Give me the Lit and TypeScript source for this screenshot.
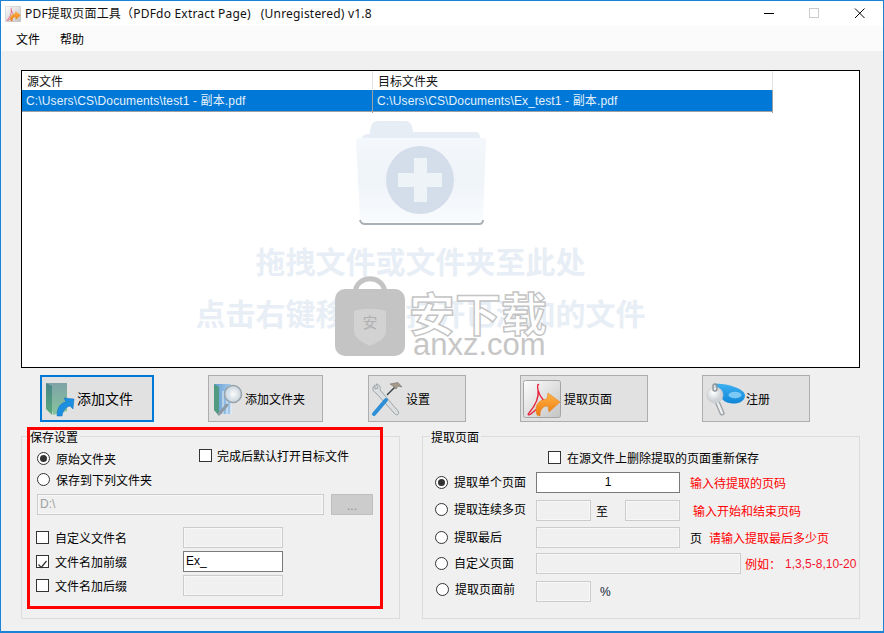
import { LitElement, html, css, svg } from "lit";
import { customElement } from "lit/decorators.js";

const pdfIcon = (id: string) => svg`
  <defs>
    <linearGradient id="${id}t" x1="0" y1="0" x2="1" y2="1"><stop offset="0" stop-color="#fdfdfd"/><stop offset="1" stop-color="#c4c4c4"/></linearGradient>
    <linearGradient id="${id}a" x1="0" y1="0" x2="0" y2="1"><stop offset="0" stop-color="#ffb347"/><stop offset="1" stop-color="#ee7a0c"/></linearGradient>
  </defs>
  <rect x="0.5" y="0.5" width="37" height="37" rx="2" fill="url(#${id}t)" stroke="#a5a5a5"/>
  <path d="M16 5 C15 3.5 14 5 15 10 C16 17 12 26 6 33 C4 35 6 36 9 33 C14 28 20 24 30 23 M15 10 C17 18 21 22 28 25" fill="none" stroke="#e8203a" stroke-width="1.3"/>
  <path d="M14 35 C11 27 14 20 24 19 L25 13 L37 22 L26 32 L25 26 C20 26 17 29 17 36 Z" fill="url(#${id}a)" stroke="#e07a10" stroke-width=".5"/>`;

const icons = {
  file: html`<svg class="ic" width="30" height="36" viewBox="0 0 30 36">
    <defs>
      <linearGradient id="f1" x1="0" y1="0" x2="0" y2="1"><stop offset="0" stop-color="#7fa3a6"/><stop offset="1" stop-color="#86c49c"/></linearGradient>
      <linearGradient id="f2" x1="0" y1="0" x2="0" y2="1"><stop offset="0" stop-color="#4a858a"/><stop offset="1" stop-color="#5aa97a"/></linearGradient>
    </defs>
    <path d="M1 2 H22 V30 L8 34 Z" fill="url(#f1)"/>
    <path d="M1 2 L7 5 V34 L1 28 Z" fill="url(#f2)"/>
    <path d="M12 35 C12 27 15 22 21 21 L19 17 L29 18 L28 28 L25 25 C21 26 18 29 17 35 Z" fill="#1d8fe0" stroke="#0e6fc0" stroke-width=".5"/>
  </svg>`,
  folder: html`<svg class="ic" width="30" height="36" viewBox="0 0 30 36">
    <defs>
      <linearGradient id="g1" x1="0" y1="0" x2="1" y2="0"><stop offset="0" stop-color="#5e9ad0"/><stop offset="1" stop-color="#a9cdec"/></linearGradient>
      <radialGradient id="g2"><stop offset="0" stop-color="#fff" stop-opacity=".85"/><stop offset="1" stop-color="#c7d3dc" stop-opacity=".9"/></radialGradient>
    </defs>
    <path d="M1 3 H18 V33 H9 L1 29 Z" fill="url(#g1)"/>
    <path d="M1 3 L6 6 V35 L1 29 Z" fill="#4f9a80"/>
    <path d="M10 10 V33 M14 10 V33 M18 18 V33" stroke="#eaf3fb" stroke-width="1"/>
    <path d="M14 24 L6 33" stroke="#8d9aa3" stroke-width="3" stroke-linecap="round"/>
    <circle cx="20" cy="13" r="8.5" fill="url(#g2)" stroke="#97a3ab" stroke-width="1.5"/>
  </svg>`,
  tools: html`<svg class="ic" width="32" height="36" viewBox="0 0 32 36">
    <path d="M5 4 C2 6 2 10 6 12 L25 33 C27 35 30 33 28 30 L10 9 C11 6 9 3 6 3 L8 7 L5 8 Z" fill="#dcdfe1" stroke="#8c9498" stroke-width=".8"/>
    <path d="M17 14 L26 5" stroke="#3c4246" stroke-width="1.5"/>
    <path d="M20 3 L28 1.5 L32 6 L28 5 L26 8 L23 5 Z" fill="#a39a8c" stroke="#6b655c" stroke-width=".5"/>
    <path d="M4 33 L16 19" stroke="#2f8fd6" stroke-width="4" stroke-linecap="round"/>
  </svg>`,
  pdf: html`<svg class="ic" width="38" height="38" viewBox="0 0 38 38">${pdfIcon("b")}</svg>`,
  key: html`<svg class="ic" width="39" height="34" viewBox="0 0 39 34">
    <defs>
      <linearGradient id="k1" x1="0" y1="0" x2="0" y2="1"><stop offset="0" stop-color="#3bb0f0"/><stop offset="1" stop-color="#1186d8"/></linearGradient>
      <radialGradient id="k2" cx=".4" cy=".35"><stop offset="0" stop-color="#fff"/><stop offset="1" stop-color="#cfd3d6"/></radialGradient>
    </defs>
    <path d="M9 2 C18 1 38 6 39 13 C39 22 27 23 20 20 C15 18 11 9 9 2 Z" fill="url(#k1)"/>
    <ellipse cx="29" cy="13" rx="6.5" ry="3.2" fill="#7cc9f6"/>
    <path d="M10 17 L16 31" stroke="#9ba1a5" stroke-width="5" stroke-linecap="round"/>
    <path d="M10 17 L16 31" stroke="#eceeef" stroke-width="2.4" stroke-linecap="round"/>
    <circle cx="9" cy="13" r="8" fill="url(#k2)" stroke="#c3c7ca" stroke-width=".6"/>
    <rect x="7" y="2" width="4" height="7" rx="2" fill="none" stroke="#8b9297" stroke-width="1.4"/>
  </svg>`,
};

@customElement("app-root")
export class AppRoot extends LitElement {
  static styles = css`
    :host { display: block; width: 884px; height: 633px; font-family: "Noto Sans CJK SC", "Noto Sans", sans-serif; font-size: 12px; color: #000; }
    * { box-sizing: border-box; }
    .window { position: relative; width: 884px; height: 633px; border: 1px solid #1883d7; border-bottom-width: 2px; background: #f0f0f0; display: flex; flex-direction: column; overflow: hidden; }
    .titlebar { height: 25px; background: #fff; display: flex; align-items: center; padding-left: 4px; flex: none; }
    .title { margin-left: 4px; font-size: 12px; line-height: 25px; white-space: pre; color: #111; letter-spacing: .2px; font-family: "Noto Sans", "Noto Sans CJK SC", sans-serif; }
    .winbtns { margin-left: auto; display: flex; }
    .winbtns svg { display: block; }
    .menu { height: 25px; flex: none; background: #fbfbfb; display: flex; gap: 20px; padding-left: 15px; align-items: center; }
    .main { flex: 1; padding: 19px 23px 0 20px; display: flex; flex-direction: column; position: relative; }

    .list { position: relative; height: 298px; flex: none; background: #fff; border: 1px solid #000; overflow: hidden; }
    .lrow { display: grid; grid-template-columns: 351px 400px; width: 751px; }
    .lrow > div { padding-left: 5px; white-space: nowrap; border-right: 1px solid #e5e5e5; }
    .lhead { height: 19px; line-height: 20px; color: #111; }
    .lsel { height: 22px; background: #0078d7; color: #e4f1fb; font-family: "Liberation Sans", "Noto Sans CJK SC", sans-serif; line-height: 23px; letter-spacing: .13px; border-bottom: 1px solid #a0a0a0; }
    .lsel > div { padding-left: 4px; border-right-color: #a0a0a0; }
    .wm { position: absolute; inset: 0; pointer-events: none; }
    .wm-folder { position: absolute; left: 334px; top: 49px; }
    .wm-line { position: absolute; left: 0; width: 797px; text-align: center; font-size: 30px; font-weight: 700; color: #e8eef5; line-height: 40px; white-space: nowrap; }
    .wm-l1 { top: 169px; }
    .wm-l2 { top: 221px; }
    .wm-logo { position: absolute; left: 312px; top: 204px; }
    .wm-mark { position: absolute; left: 21px; top: 37px; width: 30px; text-align: center; color: #b0b0b0; font-size: 15px; line-height: 20px; }
    .wm-an { position: absolute; left: 387px; top: 212px; font-size: 46px; line-height: 56px; font-weight: 700; color: #fff; -webkit-text-stroke: 1.4px #c4c4c4; white-space: nowrap; }
    .wm-com { position: absolute; left: 391px; top: 256px; font-family: "Liberation Sans", sans-serif; font-size: 31px; line-height: 36px; color: #c6c6c6; white-space: nowrap; }

    .btns { display: flex; height: 47px; margin-top: 7px; flex: none; }
    .btn { height: 47px; background: #e1e1e1; border: 1px solid #adadad; display: flex; align-items: center; white-space: nowrap; }
    .ic { flex: none; display: block; }
    .b1 { width: 114px; margin-left: 19px; border: 2px solid #0078d7; padding-left: 3px; gap: 2px; font-size: 14px; }
    .b1 span { padding-bottom: 2px; }
    .b2 { width: 115px; margin-left: 54px; padding-left: 4px; gap: 2px; }
    .b3 { width: 98px; margin-left: 45px; padding-left: 1px; gap: 4px; }
    .b4 { width: 128px; margin-left: 54px; padding-left: 2px; gap: 3px; font-size: 12px; }
    .b5 { width: 108px; margin-left: 54px; padding-left: 3px; gap: 1px; }

    .groups { display: flex; margin-top: 14px; gap: 22px; height: 183px; flex: none; position: relative; }
    .group { position: relative; height: 183px; border: 1px solid #dcdcdc; flex: none; }
    .gl { width: 379px; padding: 11px 0 0 15px; }
    .gr { width: 438px; padding: 10px 0 0 12px; }
    .legend { position: absolute; top: -8px; left: 7px; background: #f0f0f0; line-height: 16px; padding: 0 2px 0 1px; }

    .radio { width: 13px; height: 13px; border-radius: 50%; border: 1px solid #333; background: #fff; flex: none; display: flex; align-items: center; justify-content: center; }
    .radio.on::after { content: ""; width: 7px; height: 7px; border-radius: 50%; background: #333; }
    .check { width: 13px; height: 13px; border: 1px solid #333; background: #fff; flex: none; display: block; }
    .opt { display: flex; align-items: center; white-space: nowrap; }
    .opt .radio { margin-right: 6px; }
    .opt .check { margin-right: 5px; }
    .txt { padding-bottom: 2px; line-height: 17px; }

    .top { display: flex; height: 43px; }
    .top-col { width: 162px; }
    .top-col .opt { height: 21px; }
    .top-col .txt { padding-bottom: 0; }
    .top-side { height: 13px; margin-top: -1px; }
    .input { height: 21px; border: 1px solid #ccc; background: #f0f0f0; box-shadow: inset 0 0 0 1px #f7f7f7; flex: none; line-height: 19px; padding-left: 2px; font-family: "Liberation Sans", sans-serif; color: #000; }
    .input.active { border-color: #7a7a7a; background: #fff; box-shadow: none; }
    .input.ghost { color: #a0a0a0; }
    .pathrow { display: flex; gap: 7px; margin-top: 3px; }
    .path { width: 287px; }
    .dots { width: 42px; height: 21px; background: #ccc; border: 1px solid #bfbfbf; color: #8f8f8f; text-align: center; line-height: 22px; font-family: "Liberation Sans", sans-serif; }
    .frows { margin: 12px 0 0 -1px; display: grid; grid-auto-rows: 21px; row-gap: 3px; }
    .frow { display: grid; grid-template-columns: 147px 100px; align-items: center; }
    .frow .opt .check { margin-right: 6px; }

    .delrow { padding-left: 113px; height: 20px; display: flex; align-items: center; }
    .delrow .opt .check { margin-right: 6px; }
    .rrows { display: grid; grid-template-rows: 28px 27px 26px 28px 21px; margin-top: 5px; }
    .rrow { display: flex; height: 21px; align-items: center; white-space: nowrap; }
    .rlabel { width: 101px; flex: none; }
    .l2 { padding-bottom: 2px; }
    .l5 { padding-bottom: 5px; padding-left: 1px; }
    .i55 { width: 55px; }
    .i144 { width: 144px; }
    .i205 { width: 205px; }
    .center { text-align: center; padding-left: 0; }
    .to { width: 34px; padding-left: 5px; flex: none; }
    .note { color: #f00; }
    .n1 { margin-left: 10px; }
    .n2 { margin-left: 13px; }
    .page { margin-left: 10px; width: 20px; flex: none; }
    .n3 { margin-left: -1px; }
    .n4 { margin-left: 4px; }
    .nums { font-family: "Liberation Sans", sans-serif; color: #f5142e; margin-left: 4px; }
    .pct { margin-left: 9px; font-family: "Liberation Sans", sans-serif; color: #123; }

    .red { position: absolute; left: 6px; top: -9px; width: 356px; height: 182px; border: 3px solid #f00; pointer-events: none; }
  `;

  private radio(label: string, on = false) {
    return html`<span class="opt"><span class="radio ${on ? "on" : ""}"></span><span class="txt">${label}</span></span>`;
  }

  private check(label: string, on = false) {
    return html`<span class="opt"><span class="check">${on
      ? html`<svg width="11" height="11" viewBox="0 0 11 11"><path d="M1.5 5.5 L4.2 8.5 L9.5 2" fill="none" stroke="#333" stroke-width="1.2"/></svg>`
      : ""}</span>${label}</span>`;
  }

  render() {
    return html`<div class="window">
      <div class="titlebar">
        <svg class="ic" width="16" height="16" viewBox="0 0 38 38">${pdfIcon("t")}</svg>
        <span class="title">PDF提取页面工具（PDFdo Extract Page)   (Unregistered) v1.8</span>
        <span class="winbtns">
          <svg width="119" height="25" viewBox="0 0 119 25">
            <path d="M0 12.5 H10" stroke="#000" stroke-width="1"/>
            <rect x="45.5" y="7.5" width="9" height="9" fill="none" stroke="#ccc"/>
            <path d="M91 7.5 L100.5 17 M100.5 7.5 L91 17" stroke="#000" stroke-width="1"/>
          </svg>
        </span>
      </div>
      <div class="menu"><span>文件</span><span>帮助</span></div>
      <div class="main">
        <div class="list">
          <div class="lrow lhead"><div>源文件</div><div>目标文件夹</div></div>
          <div class="lrow lsel"><div>C:\\Users\\CS\\Documents\\test1 - 副本.pdf</div><div>C:\\Users\\CS\\Documents\\Ex_test1 - 副本.pdf</div></div>
          <div class="wm">
            <svg class="wm-folder" width="132" height="106" viewBox="0 0 132 106">
              <defs>
                <linearGradient id="wb" x1="0" y1="0" x2="0" y2="1"><stop offset="0" stop-color="#f4f7fb"/><stop offset=".5" stop-color="#eff4f9"/><stop offset="1" stop-color="#f9fbfd"/></linearGradient>
              </defs>
              <path d="M14 14 Q14 1 22 1 H50 Q56 1 57 12 H120 Q124 12 124 18 H6 Q6 14 14 14 Z" fill="#e6edf4"/>
              <path d="M3 18 H128 Q130 18 130 22 L127 98 Q127 102 123 102 H8 Q4 102 4 98 L0 22 Q0 18 3 18 Z" fill="url(#wb)"/>
              <path d="M4 100 Q5 104 9 104 H123 Q127 104 127 100" fill="none" stroke="#a9b0b6" stroke-width="2"/>
              <circle cx="64" cy="60" r="34" fill="#d3deea"/>
              <path d="M58 38 H71 V53 H86 V67 H71 V82 H58 V67 H42 V53 H58 Z" fill="#eef3f8"/>
            </svg>
            <div class="wm-line wm-l1">拖拽文件或文件夹至此处</div>
            <div class="wm-line wm-l2">点击右键移除或打开已添加的文件</div>
            <svg class="wm-logo" width="72" height="82" viewBox="0 0 72 82">
              <path d="M21 18 C22 -1 50 -1 51 18" fill="none" stroke="#c4c4c4" stroke-width="5"/>
              <rect x="1" y="14" width="70" height="67" rx="10" fill="#c4c4c4"/>
              <path d="M20 36 C30 33 42 33 52 36 V56 C52 64 42 68 36 71 C30 68 20 64 20 56 Z" fill="#d2d2d2"/>
            </svg>
            <div class="wm-logo"><div class="wm-mark">安</div></div>
            <div class="wm-an">安下载</div>
            <div class="wm-com">anxz.com</div>
          </div>
        </div>

        <div class="btns">
          <div class="btn b1">${icons.file}<span>添加文件</span></div>
          <div class="btn b2">${icons.folder}<span>添加文件夹</span></div>
          <div class="btn b3">${icons.tools}<span>设置</span></div>
          <div class="btn b4">${icons.pdf}<span>提取页面</span></div>
          <div class="btn b5">${icons.key}<span>注册</span></div>
        </div>

        <div class="groups">
          <div class="group gl">
            <span class="legend">保存设置</span>
            <div class="top">
              <div class="top-col">
                ${this.radio("原始文件夹", true)}
                ${this.radio("保存到下列文件夹")}
              </div>
              <div class="top-side">${this.check("完成后默认打开目标文件")}</div>
            </div>
            <div class="pathrow">
              <div class="input ghost path">D:\\</div>
              <div class="dots">...</div>
            </div>
            <div class="frows">
              <div class="frow">${this.check("自定义文件名")}<div class="input"></div></div>
              <div class="frow">${this.check("文件名加前缀", true)}<div class="input active">Ex_</div></div>
              <div class="frow">${this.check("文件名加后缀")}<div class="input"></div></div>
            </div>
          </div>

          <div class="group gr">
            <span class="legend">提取页面</span>
            <div class="delrow">${this.check("在源文件上删除提取的页面重新保存")}</div>
            <div class="rrows">
              <div class="rrow"><div class="rlabel">${this.radio("提取单个页面", true)}</div><div class="input active i144 center">1</div><span class="note n1">输入待提取的页码</span></div>
              <div class="rrow"><div class="rlabel l2">${this.radio("提取连续多页")}</div><div class="input i55"></div><span class="to">至</span><div class="input i55"></div><span class="note n2">输入开始和结束页码</span></div>
              <div class="rrow"><div class="rlabel">${this.radio("提取最后")}</div><div class="input i144"></div><span class="page">页</span><span class="note n3">请输入提取最后多少页</span></div>
              <div class="rrow"><div class="rlabel">${this.radio("自定义页面")}</div><div class="input i205"></div><span class="note n4">例如：</span><span class="nums">1,3,5-8,10-20</span></div>
              <div class="rrow"><div class="rlabel l5">${this.radio("提取页面前")}</div><div class="input i55"></div><span class="pct">%</span></div>
            </div>
          </div>
          <div class="red"></div>
        </div>
      </div>
    </div>`;
  }
}
